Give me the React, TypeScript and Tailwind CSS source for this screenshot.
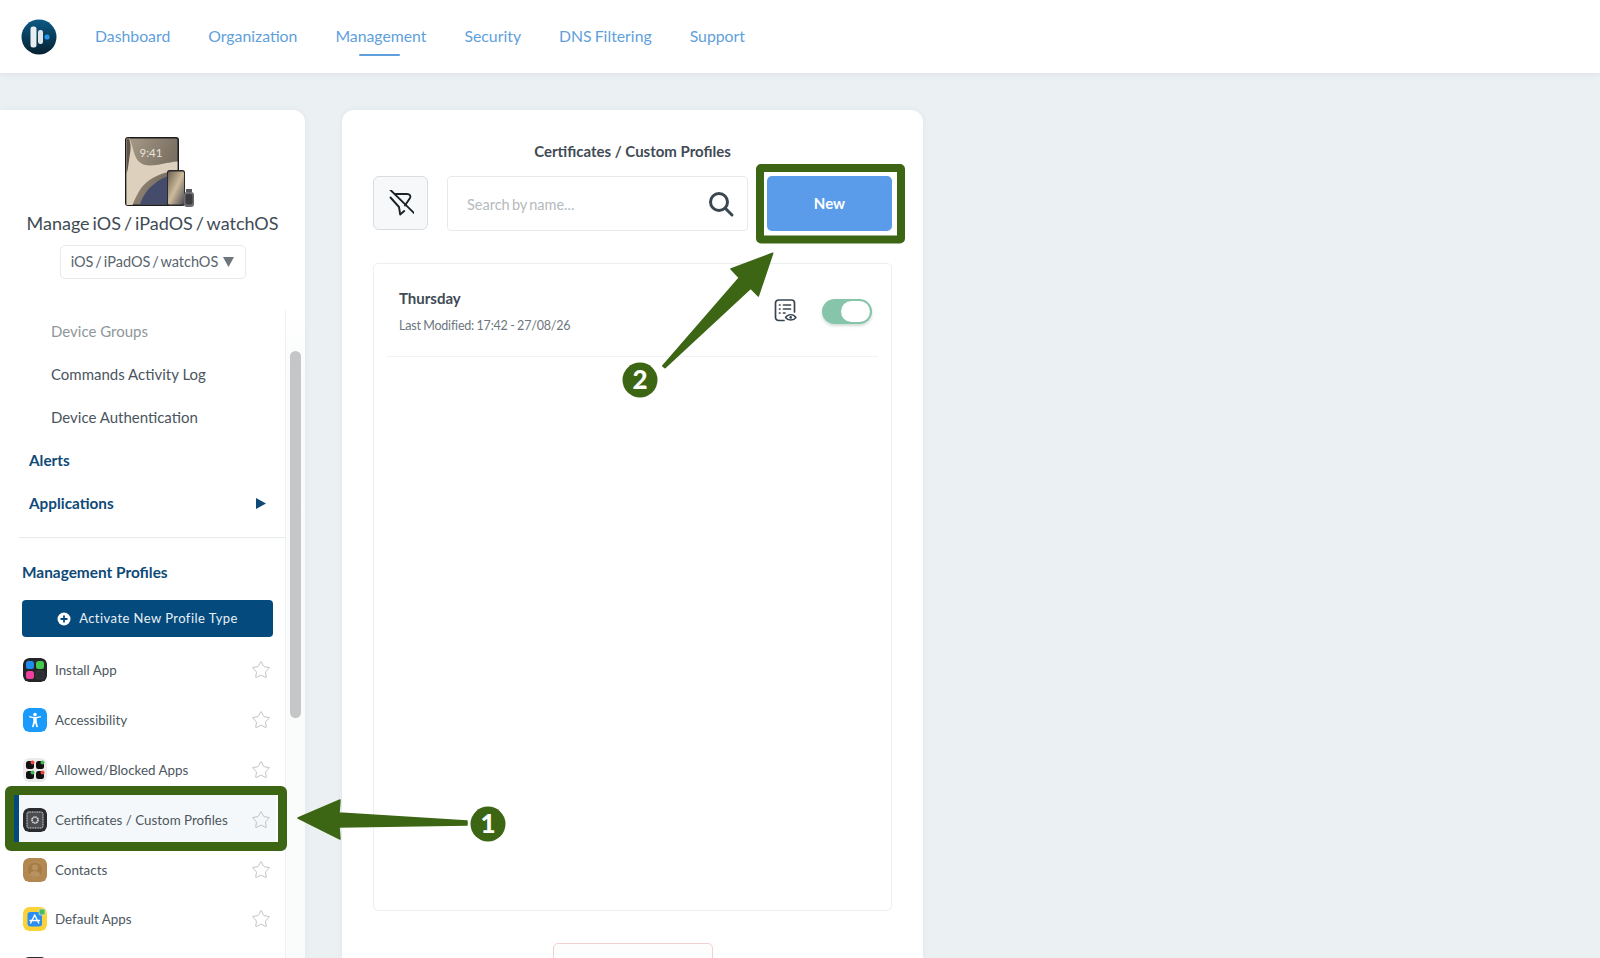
import React from "react";
import { Star } from "lucide-react";

const nav = ["Dashboard", "Organization", "Management", "Security", "DNS Filtering", "Support"];

function Logo() {
  return (
    <svg width="36" height="36" viewBox="0 0 36 36">
      <defs>
        <linearGradient id="lg" x1="0" y1="0" x2="0" y2="1">
          <stop offset="0" stopColor="#0b5a86" />
          <stop offset="1" stopColor="#07202f" />
        </linearGradient>
      </defs>
      <circle cx="18" cy="18" r="17.5" fill="url(#lg)" />
      <rect x="9.5" y="7.5" width="6" height="21" rx="2.5" fill="#e8edf0" />
      <rect x="17" y="11" width="5" height="14" rx="2.2" fill="#dfe6ea" />
      <circle cx="26" cy="18" r="2.6" fill="#2496ed" />
    </svg>
  );
}

function Devices() {
  return (
    <svg width="72" height="72" viewBox="0 0 72 72" className="ml-[14px]">
      <defs>
        <linearGradient id="ip" x1="0" y1="0" x2="1" y2="0.6">
          <stop offset="0" stopColor="#a89b88" />
          <stop offset="1" stopColor="#6f665a" />
        </linearGradient>
        <linearGradient id="ph" x1="0" y1="0" x2="1" y2="1">
          <stop offset="0" stopColor="#6d6150" />
          <stop offset="0.5" stopColor="#cdbb9c" />
          <stop offset="1" stopColor="#4a4a55" />
        </linearGradient>
      </defs>
      <rect x="1" y="1" width="54" height="69" rx="3" fill="#1b1b1e" />
      <rect x="2.500" y="2.500" width="51" height="66" rx="1.500" fill="url(#ip)" />
      <path d="M2.500 2.500h3c5 12 4 20 12 25 9 5 22-1 36-2v9c-14 1-28 7-36 17-4 6-7 12-9 17.500H2.500z" fill="#ddd0bc" />
      <path d="M2.500 2.500h2.500c3 8 1 14 0 22-1 6-1 10-2.500 13z" fill="#5f554a" />
      <path d="M53.500 38v30.500H16c4-14 18-28 37.500-30.500z" fill="#454c6b" />
      <text x="27" y="21" textAnchor="middle" fontSize="11.500" fill="#e8e3da" fontFamily="Lato, sans-serif">9:41</text>
      <rect x="43" y="34" width="18" height="36" rx="2.500" fill="#2a2a2c" />
      <rect x="44" y="35.500" width="16" height="33" rx="1.500" fill="url(#ph)" />
      <rect x="60" y="56" width="10" height="15" rx="3" fill="#6a6c70" />
      <rect x="61.500" y="58" width="7" height="10.500" rx="2" fill="#3c3d41" />
      <rect x="62" y="53" width="6" height="3" fill="#55575b" />
    </svg>
  );
}

const tile = "w-6 h-6 rounded-[6px] shrink-0 block";

function InstallIcon() {
  return (
    <svg className={tile} viewBox="0 0 24 24">
      <rect width="24" height="24" rx="6" fill="#242528" />
      <rect x="3" y="3" width="8" height="8" rx="2.500" fill="#1f8cf0" />
      <rect x="13" y="3" width="8" height="8" rx="2.500" fill="#45c94d" />
      <rect x="3" y="13" width="8" height="8" rx="2.500" fill="#ef3f9f" />
      <rect x="13" y="13" width="8" height="8" rx="2.500" fill="#2c2d31" stroke="#45464a" strokeWidth="0.600" />
    </svg>
  );
}
function AccessIcon() {
  return (
    <svg className={tile} viewBox="0 0 24 24">
      <rect width="24" height="24" rx="6" fill="#1a9bfb" />
      <circle cx="12" cy="6.600" r="1.800" fill="#fff" />
      <path d="M6 9.300l4.300 1v3.200L9 19l1.500.3 1.500-4.500 1.500 4.500 1.500-.3-1.300-5.500v-3.200l4.300-1-.3-1.300-4.700 1H11L6.300 8z" fill="#fff" />
    </svg>
  );
}
function AllowedIcon() {
  return (
    <svg className={tile} viewBox="0 0 24 24">
      <rect width="24" height="24" rx="6" fill="#eceaea" />
      <rect x="3" y="3" width="8" height="8" rx="2.500" fill="#111" />
      <rect x="13" y="3" width="8" height="8" rx="2.500" fill="#111" />
      <rect x="3" y="13" width="8" height="8" rx="2.500" fill="#111" />
      <rect x="13" y="13" width="8" height="8" rx="2.500" fill="#111" />
      <circle cx="9.500" cy="4.500" r="2" fill="#e8483d" />
      <circle cx="19.500" cy="4.500" r="2" fill="#41b957" />
      <circle cx="9.500" cy="14.500" r="2" fill="#41b957" />
      <circle cx="19.500" cy="14.500" r="2" fill="#e8483d" />
    </svg>
  );
}
function CertIcon() {
  return (
    <svg className={tile} viewBox="0 0 24 24">
      <rect width="24" height="24" rx="6" fill="#2b2c2f" />
      <rect x="4" y="4" width="16" height="16" rx="1.500" fill="#4a4c50" stroke="#d4d6d8" strokeWidth="1" strokeDasharray="1.200 0.500" />
      <circle cx="12" cy="12" r="3" fill="none" stroke="#d8dadc" strokeWidth="1.700" strokeDasharray="1.500 0.500" />
    </svg>
  );
}
function ContactsIcon() {
  return (
    <svg className={tile} viewBox="0 0 24 24">
      <rect width="24" height="24" rx="6" fill="#b38850" />
      <circle cx="12" cy="12" r="8" fill="#a67c47" stroke="#c09a68" strokeWidth="0.600" />
      <circle cx="12" cy="9.500" r="3" fill="#b8925f" />
      <path d="M6.500 17c1-3 3-4 5.500-4s4.500 1 5.500 4c-3 2.500-8 2.500-11 0z" fill="#b8925f" />
    </svg>
  );
}
function DefaultIcon() {
  return (
    <svg className={tile} viewBox="0 0 24 24">
      <rect width="24" height="24" rx="6" fill="#fbd338" />
      <rect x="4.500" y="5" width="14.500" height="14.500" rx="3" fill="#2b8df0" />
      <path d="M11.700 8l-4 8M11.700 8l4 8M7 13.500h9.500" stroke="#fff" strokeWidth="1.400" fill="none" strokeLinecap="round" />
      <rect x="16" y="2" width="6" height="6" rx="1.200" fill="#4cb963" stroke="#e8f3d8" strokeWidth="0.700" />
    </svg>
  );
}

const profiles: [string, React.ReactNode][] = [
  ["Install App", <InstallIcon />],
  ["Accessibility", <AccessIcon />],
  ["Allowed/Blocked Apps", <AllowedIcon />],
  ["Certificates / Custom Profiles", <CertIcon />],
  ["Contacts", <ContactsIcon />],
  ["Default Apps", <DefaultIcon />],
];

function Sidebar() {
  return (
    <aside className="w-[305px] h-[848px] shrink-0 bg-white rounded-tr-xl flex flex-col shadow-[0_0_6px_rgba(40,60,80,0.06)] overflow-hidden">
      <div className="h-[200px] shrink-0 flex flex-col items-center pt-[26px]">
        <Devices />
        <div className="mt-[1px] text-[18px] leading-[28px] text-[#3f4b55] [word-spacing:-1.600px]">Manage iOS / iPadOS / watchOS</div>
        <div className="mt-[8px] w-[186px] h-[34px] border border-[#e6eaed] rounded-[5px] flex items-center justify-center gap-[5px] text-[14.500px] text-[#5a656e] [word-spacing:-1.800px]">
          iOS / iPadOS / watchOS
          <svg width="11" height="10" viewBox="0 0 11 10"><path d="M0 0h11L5.500 10z" fill="#6d767d" /></svg>
        </div>
      </div>
      <div className="flex-1 flex min-h-0">
        <div className="w-[287px] border-r border-[#eef1f3] flex flex-col overflow-hidden">
          <div className="h-[43px] shrink-0 flex items-center pl-[51px] text-[15px] text-[#8f969b]">Device Groups</div>
          <div className="h-[43px] shrink-0 flex items-center pl-[51px] text-[15px] text-[#4a555e]">Commands Activity Log</div>
          <div className="h-[43px] shrink-0 flex items-center pl-[51px] text-[15px] text-[#4a555e]">Device Authentication</div>
          <div className="h-[43px] shrink-0 flex items-center pl-[29px] text-[15.300px] font-bold text-[#0e4a78]">Alerts</div>
          <div className="h-[43px] shrink-0 flex items-center justify-between pl-[29px] pr-[19px] text-[15.300px] font-bold text-[#0e4a78]">
            Applications
            <svg width="10" height="11" viewBox="0 0 10 11"><path d="M0 0l10 5.500L0 11z" fill="#0e4a78" /></svg>
          </div>
          <div className="mt-[12px] ml-[19px] h-px shrink-0 bg-[#e8ecee]" />
          <div className="mt-[24px] ml-[22px] text-[15.400px] leading-[20px] font-bold text-[#0e4a78]">Management Profiles</div>
          <div className="mt-[18px] ml-[22px] w-[251px] h-[37px] shrink-0 rounded-[4px] bg-[#054a7d] flex items-center justify-center gap-[8px] text-[13px] tracking-[0.450px] text-[#e9f0f5]">
            <svg width="14" height="14" viewBox="0 0 14 14"><circle cx="7" cy="7" r="6.500" fill="#fff" /><path d="M7 3.500v7M3.500 7h7" stroke="#054a7d" strokeWidth="1.800" /></svg>
            Activate New Profile Type
          </div>
          <div className="mt-[8.500px] flex flex-col">
            {profiles.map(([name, icon], i) => (
              <div key={name} className={i === 3 ? "h-[49.800px] shrink-0 flex items-center pl-[4px] ml-[14px] mr-[9px] pr-[5px] border-l-[5px] border-[#054a7d] bg-[#f5f8fa]" : "h-[49.800px] shrink-0 flex items-center pl-[23px] pr-[14px]"}>
                {icon}
                <span className="ml-[8px] flex-1 text-[13.400px] text-[#4c5760]">{name}</span>
                <Star size={20} strokeWidth={0.9} className="text-[#a9afb3]" />
              </div>
            ))}
            <div className="h-[50px] shrink-0 flex items-center pl-[23px]">
              <span className={tile + " bg-[#2b2c2f]"} />
            </div>
          </div>
        </div>
        <div className="flex-1 bg-gradient-to-b from-white to-[#fafbfb] to-[10%] px-[4px]">
          <div className="w-[11px] h-[367px] mt-[41px] rounded-full bg-[#c4c6c8]" />
        </div>
      </div>
    </aside>
  );
}

function Main() {
  return (
    <main className="ml-[37px] w-[581px] h-[848px] shrink-0 bg-white rounded-t-xl shadow-[0_0_6px_rgba(40,60,80,0.06)] flex flex-col items-center overflow-hidden">
      <div className="mt-[31px] text-[15px] leading-[20px] font-bold text-[#3f4b55]">Certificates / Custom Profiles</div>
      <div className="mt-[15px] w-[519px] flex gap-[19px] items-start">
        <button className="w-[55px] h-[54px] shrink-0 rounded-[6px] border border-[#d8dde0] bg-[#f6f8f9] flex items-center justify-center">
          <svg width="26" height="26" viewBox="0 0 26 26" fill="none" stroke="#1d2226" strokeWidth="1.900" strokeLinejoin="round" strokeLinecap="round">
            <path d="M7.500 4h11.500c3 0 4 2.200 3 4l-5 7.500" />
            <path d="M2.500 7.500l8.500 9.500 1.200 7.500 4-3.500" />
            <path d="M2.500 0l24.500 24" />
          </svg>
        </button>
        <div className="w-[301px] h-[55px] shrink-0 rounded-[4px] border border-[#e6eaed] flex items-center pl-[19px] pr-[12px] justify-between">
          <span className="mt-[2px] text-[14.500px] text-[#b4babe] [word-spacing:-1.500px]">Search by name...</span>
          <svg width="28" height="28" viewBox="0 0 28 28" fill="none" stroke="#3a4750" strokeWidth="3" strokeLinecap="round"><circle cx="12" cy="12" r="8.500" /><path d="M18.500 18.500l6.500 6.500" /></svg>
        </div>
        <button className="w-[125px] h-[55px] shrink-0 rounded-[5px] bg-[#5b9cea] text-white text-[15px] font-bold">New</button>
      </div>
      <div className="mt-[32px] w-[519px] h-[648px] shrink-0 rounded-[5px] border border-[#eceff1] flex flex-col px-[13px]">
        <div className="h-[93px] shrink-0 border-b border-[#f0f2f4] flex items-start justify-between pl-[12px] pr-[6px] pt-[23px]">
          <div>
            <div className="text-[15px] leading-[22px] font-bold text-[#3f4b55]">Thursday</div>
            <div className="mt-[7px] text-[12.500px] leading-[20px] tracking-[-0.200px] [word-spacing:-0.500px] text-[#6d7680]">Last Modified: 17:42 - 27/08/26</div>
          </div>
          <div className="flex items-start gap-[25px] pt-[12px]">
            <svg width="23" height="23" viewBox="0 0 23 23" fill="none" stroke="#39454e" strokeWidth="1.700" strokeLinecap="round" strokeLinejoin="round">
              <path d="M10 21.500H4.500a3 3 0 0 1-3-3V4a3 3 0 0 1 3-3h13a3 3 0 0 1 3 3v9" />
              <path d="M5.500 6h.5M9.500 6h7M5.500 10h.5M9.500 10h7M5.500 14h.5M9.500 14h1.500" />
              <path d="M11.500 18.500c2.500-3.800 8-3.800 10.500 0-2.500 3.400-8 3.400-10.500 0z" strokeWidth="1.400" />
              <circle cx="16.700" cy="18.400" r="1.300" fill="#39454e" stroke="none" />
            </svg>
            <div className="w-[50px] h-[25px] rounded-full bg-[#86c5a9] flex items-center justify-end pr-[2px] shadow-[0_2px_3px_rgba(40,90,70,0.22)]">
              <div className="w-[29px] h-[21px] rounded-full bg-white" />
            </div>
          </div>
        </div>
      </div>
      <div className="mt-[32px] w-[160px] h-[40px] shrink-0 rounded-[5px] border border-[#f6cfcf] bg-[#fdfdfd]" />
    </main>
  );
}

function Annotations() {
  const green = "#3c6614";
  return (
    <svg className="absolute left-0 top-0 pointer-events-none" width="1600" height="958" viewBox="0 0 1600 958">
      <rect x="9.500" y="790.500" width="273" height="56" rx="1.500" fill="none" stroke={green} strokeWidth="9" />
      <rect x="760" y="168" width="141" height="71.500" rx="1" fill="none" stroke={green} strokeWidth="8" />
      <path d="M298 818L340 800 L339 813 L467 821 V825 L339 827 L340 839Z" fill={green} stroke={green} strokeWidth="1.500" strokeLinejoin="round" />
      <circle cx="488" cy="824" r="17.500" fill={green} />
      <text x="488" y="833" textAnchor="middle" fontFamily="Lato, sans-serif" fontWeight="900" fontSize="26" fill="#fff">1</text>
      <path d="M772.700 253.300L731 269L739.300 277.700L662.700 366L665 367.700L750.700 288.300L758.300 296Z" fill={green} stroke={green} strokeWidth="1.500" strokeLinejoin="round" />
      <circle cx="640" cy="380" r="17.500" fill={green} />
      <text x="640" y="389" textAnchor="middle" fontFamily="Lato, sans-serif" fontWeight="900" fontSize="26" fill="#fff">2</text>
    </svg>
  );
}

export default function App() {
  return (
    <div className="relative w-[1600px] h-[958px] overflow-hidden bg-[#ebf0f3] font-['Lato',sans-serif]">
      <header className="h-[73px] bg-white flex items-center pl-[21px] shadow-[0_1px_6px_rgba(40,60,80,0.08)]">
        <Logo />
        <nav className="ml-[38px] flex gap-[38px] -mt-[2px]">
          {nav.map((n) => (
            <div key={n} className="relative text-[15.800px] leading-[24px] [word-spacing:-1px] text-[#5f9fdc]">
              {n}
              {n === "Management" && <span className="absolute left-[24px] w-[41px] h-[2.500px] top-[30px] bg-[#5f9fdc] rounded-full" />}
            </div>
          ))}
        </nav>
      </header>
      <div className="flex mt-[37px]">
        <Sidebar />
        <Main />
      </div>
      <Annotations />
    </div>
  );
}
